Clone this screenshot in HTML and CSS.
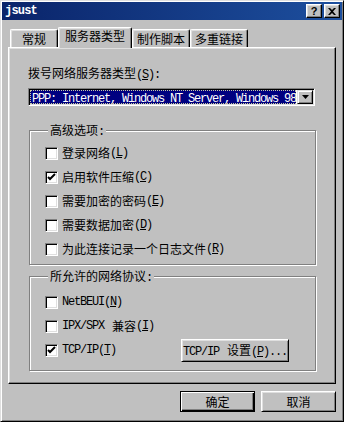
FILE: index.html
```html
<!DOCTYPE html>
<html lang="zh-CN">
<head>
  <meta charset="UTF-8">
  <title>jsust</title>
  <link rel="stylesheet" href="styles.css">
</head>
<body>
  <div class="window">

    <!-- Title bar -->
    <div class="titlebar">
      <span class="title">jsust</span>
      <div class="title-buttons">
        <button class="tbtn help">?</button>
        <button class="tbtn">
          <svg width="8" height="7" viewBox="0 0 8 7"><path d="M0 0h2l2 2 2-2h2L5 3.5 8 7H6L4 5 2 7H0l3-3.5z" fill="#000"/></svg>
        </button>
      </div>
    </div>

    <!-- Tabs -->
    <div class="tabs">
      <div class="tab tab-short">常规</div>
      <div class="tab active">服务器类型</div>
      <div class="tab">制作脚本</div>
      <div class="tab">多重链接</div>
    </div>

    <div class="panel">
      <div class="field-label">拨号网络服务器类型<span class="en">(<u>S</u>):</span></div>

      <div class="combo">
        <div class="combo-value"><span class="en">PPP: Internet, Windows NT Server, Windows 98</span></div>
        <div class="combo-btn">
          <svg width="7" height="4" viewBox="0 0 7 4"><path d="M0 0h7L3.5 4z" fill="#000"/></svg>
        </div>
      </div>

      <!-- Advanced options -->
      <fieldset class="group">
        <legend>高级选项<span class="en">:</span></legend>
        <div class="check"><span class="box"></span>登录网络<span class="en">(<u>L</u>)</span></div>
        <div class="check"><span class="box checked"><svg width="9" height="9" viewBox="0 0 9 9"><path d="M1 4l2 2 5-5" stroke="#000" stroke-width="2" fill="none"/></svg></span>启用软件压缩<span class="en">(<u>C</u>)</span></div>
        <div class="check"><span class="box"></span>需要加密的密码<span class="en">(<u>E</u>)</span></div>
        <div class="check"><span class="box"></span>需要数据加密<span class="en">(<u>D</u>)</span></div>
        <div class="check"><span class="box"></span>为此连接记录一个日志文件<span class="en">(<u>R</u>)</span></div>
      </fieldset>

      <!-- Protocols -->
      <fieldset class="group protocols">
        <legend>所允许的网络协议<span class="en">:</span></legend>
        <div class="check"><span class="box"></span><span class="en">NetBEUI(<u>N</u>)</span></div>
        <div class="check"><span class="box"></span><span class="en gap">IPX/SPX</span>兼容<span class="en">(<u>I</u>)</span></div>
        <div class="check">
          <span class="box checked"><svg width="9" height="9" viewBox="0 0 9 9"><path d="M1 4l2 2 5-5" stroke="#000" stroke-width="2" fill="none"/></svg></span><span class="en">TCP/IP(<u>T</u>)</span>
          <button class="btn settings"><span class="en gap">TCP/IP</span>设置<span class="en">(<u>P</u>)...</span></button>
        </div>
      </fieldset>
    </div>

    <div class="actions">
      <button class="btn default">确定</button>
      <button class="btn">取消</button>
    </div>
  </div>
</body>
</html>
```

FILE: styles.css
```css
/* Reset */
* {
  margin: 0;
  padding: 0;
  box-sizing: border-box;
}

body {
  background: #c0c0c0;
  font: 12px/14px "Noto Sans CJK SC", sans-serif;
  color: #000;
}

/* Latin text in the dialog font */
.en {
  font-family: "Liberation Mono", monospace;
  letter-spacing: -1.2px;
  line-height: 12px;
}

.en.gap {
  margin-right: 8px;
}

u {
  text-underline-offset: 1px;
}

.window {
  width: 344px;
  height: 422px;
  padding: 1px;
  background: #c0c0c0;
  border: 1px solid;
  border-color: #dfdfdf #000 #000 #dfdfdf;
  box-shadow: inset 1px 1px #fff, inset -1px -1px #808080;
}

/* Title bar */
.titlebar {
  height: 18px;
  display: flex;
  align-items: center;
  justify-content: space-between;
  padding: 0 2px 0 3px;
  background: linear-gradient(90deg, #0a246a, #1d4f9e);
}

.title {
  color: #fff;
  font: bold 12px "Liberation Mono", monospace;
  letter-spacing: -0.8px;
}

.title-buttons {
  display: flex;
  gap: 2px;
}

.tbtn {
  width: 16px;
  height: 14px;
  display: flex;
  align-items: center;
  justify-content: center;
  background: #c0c0c0;
  border: 1px solid;
  border-color: #fff #000 #000 #fff;
  box-shadow: inset -1px -1px #808080, inset 1px 1px #dfdfdf;
  font: bold 11px/12px "Liberation Sans", sans-serif;
}

/* Tabs */
.tabs {
  display: flex;
  align-items: flex-end;
  margin: 7px 0 0 8px;
}

.tab {
  height: 18px;
  padding: 1px 4px 0;
  text-align: center;
  line-height: 16px;
  border-top: 1px solid #fff;
  border-left: 1px solid #fff;
  border-right: 1px solid #000;
  border-radius: 2px 2px 0 0;
  box-shadow: inset -1px 0 #808080, inset 1px 1px #dfdfdf;
}

.tab-short {
  min-width: 48px;
}

.tab.active {
  height: 21px;
  padding: 0 6px;
  margin-bottom: -1px;
  background: #c0c0c0;
  position: relative;
  z-index: 1;
}

/* Tab page */
.panel {
  margin: 0 6px;
  padding: 18px 0 12px 19px;
  border: 1px solid;
  border-color: #fff #000 #000 #fff;
  box-shadow: inset -1px -1px #808080, inset 1px 1px #dfdfdf;
}

.field-label {
  height: 14px;
}

/* Combo box */
.combo {
  width: 287px;
  height: 18px;
  margin-top: 8px;
  display: flex;
  background: #fff;
  border: 1px solid;
  border-color: #808080 #fff #fff #808080;
  box-shadow: inset 1px 1px #000, inset -1px -1px #dfdfdf;
}

.combo-value {
  flex: 1;
  height: 14px;
  margin: 1px 1px 1px 1px;
  overflow: hidden;
  white-space: nowrap;
  background: #000080;
  color: #fff;
  outline: 1px dotted #c8c8a0;
  outline-offset: -1px;
  line-height: 14px;
  padding-left: 2px;
}

.combo-value .en {
  line-height: 14px;
}

.combo-btn {
  width: 16px;
  height: 14px;
  margin: 1px 1px 1px 0;
  display: flex;
  align-items: center;
  justify-content: center;
  background: #c0c0c0;
  border: 1px solid;
  border-color: #dfdfdf #000 #000 #dfdfdf;
  box-shadow: inset 1px 1px #fff, inset -1px -1px #808080;
}

/* Group boxes */
.group {
  width: 287px;
  margin: 17px 0 0 1px;
  padding: 4px 0 3px 15px;
  border: 1px solid #808080;
  box-shadow: inset 1px 1px #fff, 1px 1px #fff;
  min-inline-size: 0;
}

.group legend {
  height: 14px;
  margin-left: 3px;
  padding: 0 2px;
  background: #c0c0c0;
  line-height: 14px;
}

.protocols {
  margin-top: 4px;
  padding: 7px 0 8px 15px;
}

.check {
  height: 24px;
  display: flex;
  align-items: center;
}

.box {
  width: 13px;
  height: 13px;
  margin-right: 4px;
  display: flex;
  align-items: center;
  justify-content: center;
  background: #fff;
  border: 1px solid;
  border-color: #808080 #fff #fff #808080;
  box-shadow: inset 1px 1px #000, inset -1px -1px #dfdfdf;
}

/* Buttons */
.btn {
  height: 21px;
  width: 75px;
  background: #c0c0c0;
  font: 12px/14px "Noto Sans CJK SC", sans-serif;
  color: #000;
  border: 1px solid;
  border-color: #fff #000 #000 #fff;
  box-shadow: inset 1px 1px #dfdfdf, inset -1px -1px #808080;
}

.btn.default {
  border-color: #000;
  box-shadow: inset 1px 1px #fff, inset -1px -1px #000, inset -2px -2px #808080;
}

.settings {
  width: 108px;
  height: 23px;
  margin: 0 26px 0 auto;
}

.actions {
  display: flex;
  justify-content: flex-end;
  gap: 6px;
  margin-top: 7px;
  padding-right: 6px;
}
```
